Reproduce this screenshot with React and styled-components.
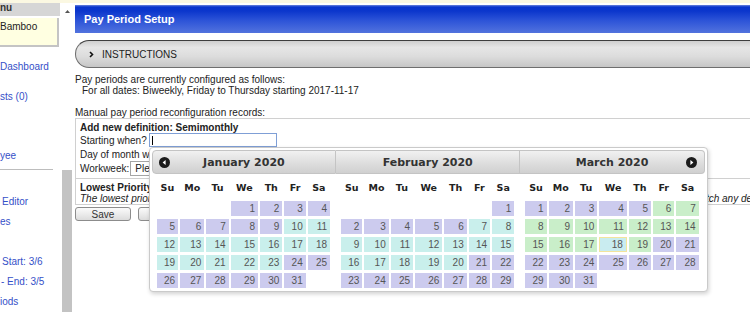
import React from 'react';
import styled, { createGlobalStyle } from 'styled-components';

const GlobalStyle = createGlobalStyle`
  html, body { margin: 0; padding: 0; background: #fff; overflow: hidden; }
  body {
    font-family: "Liberation Sans", Arial, sans-serif;
    font-size: 10px;
    color: #222;
  }
`;

const Page = styled.div`
  width: 750px;
  height: 312px;
  overflow: hidden;
  display: flex;
  flex-direction: column;
`;

const TopStrip = styled.div`
  flex: none;
  height: 3px;
  background: #fbf8e2;
`;

const Body = styled.div`
  flex: 1;
  min-height: 0;
  display: flex;
`;

/* ---------- sidebar ---------- */

const Sidebar = styled.nav`
  width: 61px;
  flex: none;
  overflow: hidden;
  display: flex;
  flex-direction: column;
`;

const MenuHead = styled.div`
  height: 13px;
  margin-right: 1px;
  background: #d6d6d6;
  font-weight: bold;
  line-height: 9px;
  color: #333;
`;

const UserBox = styled.div`
  margin-top: 2px;
  height: 24px;
  width: 57px;
  background: #ffffe1;
  border-right: 2px solid #c4c4c4;
  border-bottom: 2px solid #c4c4c4;
  padding-top: 3px;
  box-sizing: content-box;
  line-height: 12px;
`;

const NavLink = styled.div`
  height: 20px;
  line-height: 20px;
  white-space: nowrap;
  color: #3550c8;
  margin-top: ${p => p.$gap || 0}px;
  padding-left: ${p => p.$indent || 0}px;
`;

const Rule = styled.div`
  width: 53px;
  margin-top: 3px;
  border-top: 1px solid #bdbdbd;
`;

const Scroll = styled.div`
  width: 10px;
  flex: none;
  margin-left: 1px;
  display: flex;
  flex-direction: column;
`;

const ScrollTop = styled.div`
  height: 160px;
  padding-top: 7px;
  display: flex;
  justify-content: center;
  align-items: flex-start;
`;

const ScrollTrack = styled.div`
  flex: 1;
  background: #c3c3c3;
`;

/* ---------- main ---------- */

const Main = styled.main`
  flex: 1;
  min-width: 0;
  padding: 2px 0 0 3px;
`;

const TitleBar = styled.div`
  height: 28px;
  line-height: 28px;
  padding-left: 9px;
  color: #fff;
  font-weight: bold;
  font-size: 11px;
  background: linear-gradient(#6d86dc 0px, #0a35cc 2px, #0b36cc 6px, #2e55d8 16px, #5273de 28px);
`;

const InstrBar = styled.div`
  margin-top: 7px;
  height: 28px;
  box-sizing: border-box;
  border: 1px solid #6e6e6e;
  border-top-color: #3f3f3f;
  border-right: none;
  border-radius: 14px 0 0 14px;
  background: linear-gradient(#cfcfcf, #e6e6e6 25%, #dcdcdc 60%, #c6c6c6);
  display: flex;
  align-items: center;
  padding-left: 13px;
  gap: 8px;
  color: #222;
`;

const Para = styled.div`
  line-height: 11px;
  white-space: nowrap;
  margin-top: ${p => p.$gap || 0}px;
  padding-left: ${p => p.$indent || 0}px;
`;

const Form = styled.div`
  width: 720px;
  border: 1px solid #d0d0d0;
  border-right: none;
`;

const FormSection = styled.div`
  padding: 2px 4px ${p => p.$pb ?? 2}px;
  & + & { border-top: 1px solid #d0d0d0; }
`;

const FormRow = styled.div`
  display: flex;
  align-items: center;
  height: ${p => p.$h}px;
  white-space: nowrap;
  font-weight: ${p => (p.$bold ? 'bold' : 'normal')};
  font-style: ${p => (p.$italic ? 'italic' : 'normal')};
`;

const Anchor = styled.span`
  position: relative;
  display: flex;
  margin-left: 2px;
`;

const DateInput = styled.input`
  width: 128px;
  height: 14px;
  box-sizing: border-box;
  border: 1px solid #7f9fd6;
  padding: 0;
  margin: 0;
  outline: none;
  background: linear-gradient(#000, #000) no-repeat 2px 2px / 1px 9px, #fff;
`;

const Select = styled.select`
  margin-left: 1px;
  height: 15px;
  padding: 0;
  font: 10px "Liberation Sans", Arial, sans-serif;
  border: 1px solid #a5a5a5;
  background: #fff;
  color: #222;
`;

const Buttons = styled.div`
  margin-top: 2px;
  display: flex;
  gap: 7px;
`;

const Button = styled.button`
  width: 56px;
  height: 14px;
  padding: 0;
  font: 10px "Liberation Sans", Arial, sans-serif;
  color: #333;
  border: 1px solid #8c8c8c;
  border-radius: 3px;
  background: linear-gradient(#fbfbfb, #dcdcdc);
`;

/* ---------- datepicker ---------- */

const Popup = styled.div`
  position: absolute;
  top: 100%;
  left: 0;
  z-index: 5;
  width: 559px;
  box-sizing: border-box;
  padding: 2px 2px 3px;
  background: #fff;
  border: 1px solid #cacaca;
  border-radius: 4px;
  box-shadow: 1px 2px 4px rgba(0, 0, 0, 0.18);
  display: flex;
`;

const Group = styled.div`
  flex: 1;
  min-width: 0;
  display: flex;
  flex-direction: column;
`;

const MonthHead = styled.div`
  height: 24px;
  box-sizing: border-box;
  border: 1px solid #c4c4c4;
  border-left-width: ${p => (p.$first ? 1 : 0)}px;
  border-radius: ${p => (p.$first ? '4px 0 0 4px' : p.$last ? '0 4px 4px 0' : '0')};
  background: linear-gradient(#f1f1f1, #dcdcdc 60%, #d0d0d0);
  display: grid;
  grid-template-columns: 22px 1fr 22px;
  align-items: center;
`;

const MonthTitle = styled.div`
  text-align: center;
  font: bold 11px "DejaVu Sans", Verdana, sans-serif;
  color: #333;
`;

const NavSlot = styled.span`
  display: grid;
`;

const NavIcon = styled.svg`
  width: 11px;
  height: 11px;
  justify-self: ${p => (p.$side === 'prev' ? 'start' : 'end')};
  margin: ${p => (p.$side === 'prev' ? '0 0 0 6px' : '0 7px 0 0')};
`;

const Days = styled.div`
  display: grid;
  grid-template-columns: 21fr 24fr 22fr 27fr 22fr 21fr 22fr;
  grid-template-rows: 22px;
  grid-auto-rows: 15px;
  column-gap: 2px;
  row-gap: 3px;
  padding: 2px 6px 0 5px;
`;

const WeekDay = styled.div`
  display: flex;
  align-items: center;
  justify-content: center;
  font: bold 9.5px "DejaVu Sans", Verdana, sans-serif;
  color: #222;
`;

const tones = {
  lav: '#cccbee',
  teal: '#c9efec',
  green: '#c9eec9',
  today: '#c9ecf0',
};

const DayCell = styled.div`
  box-sizing: border-box;
  text-align: right;
  padding-right: 3px;
  line-height: ${p => (p.$tone === 'today' ? 13 : 15)}px;
  color: #555;
  background: ${p => tones[p.$tone] || 'transparent'};
  border: ${p => (p.$tone === 'today' ? '1px solid #f2e59c' : 'none')};
`;

const weekdays = ['Su', 'Mo', 'Tu', 'We', 'Th', 'Fr', 'Sa'];

const months = [
  { name: 'January 2020', offset: 3, days: 31, tone: d => (d >= 10 && d <= 23 ? 'teal' : 'lav'), nav: 'prev' },
  { name: 'February 2020', offset: 6, days: 29, tone: d => (d >= 7 && d <= 20 ? 'teal' : 'lav') },
  { name: 'March 2020', offset: 0, days: 31, tone: d => (d === 18 ? 'today' : d >= 6 && d <= 19 ? 'green' : 'lav'), nav: 'next' },
];

function Nav({ side }) {
  const pts = side === 'prev' ? '6.6,3 3.6,5.5 6.6,8' : '4.4,3 7.4,5.5 4.4,8';
  return (
    <NavIcon $side={side} viewBox="0 0 11 11">
      <circle cx="5.5" cy="5.5" r="5.5" fill="#1b1b1b" />
      <polygon points={pts} fill="#fff" />
    </NavIcon>
  );
}

function Month({ month, index }) {
  const blanks = Array.from({ length: month.offset });
  const days = Array.from({ length: month.days }, (_, i) => i + 1);
  return (
    <Group>
      <MonthHead $first={index === 0} $last={index === 2}>
        <NavSlot>{month.nav === 'prev' && <Nav side="prev" />}</NavSlot>
        <MonthTitle>{month.name}</MonthTitle>
        <NavSlot>{month.nav === 'next' && <Nav side="next" />}</NavSlot>
      </MonthHead>
      <Days>
        {weekdays.map(w => <WeekDay key={w}>{w}</WeekDay>)}
        {blanks.map((_, i) => <DayCell key={'b' + i} />)}
        {days.map(d => <DayCell key={d} $tone={month.tone(d)}>{d}</DayCell>)}
      </Days>
    </Group>
  );
}

function DatePicker() {
  return (
    <Popup>
      {months.map((m, i) => <Month key={m.name} month={m} index={i} />)}
    </Popup>
  );
}

export default function App() {
  return (
    <Page>
      <GlobalStyle />
      <TopStrip />
      <Body>
        <Sidebar>
          <MenuHead>nu</MenuHead>
          <UserBox>Bamboo</UserBox>
          <NavLink $gap={10}>Dashboard</NavLink>
          <NavLink $gap={10}>sts (0)</NavLink>
          <NavLink $gap={10} />
          <NavLink $gap={10}>yee</NavLink>
          <Rule />
          <NavLink $gap={22} $indent={2}>Editor</NavLink>
          <NavLink>es</NavLink>
          <NavLink />
          <NavLink $indent={2}>Start: 3/6</NavLink>
          <NavLink $indent={1}>- End: 3/5</NavLink>
          <NavLink>iods</NavLink>
        </Sidebar>
        <Scroll>
          <ScrollTop>
            <svg width="5" height="3" viewBox="0 0 5 3"><polygon points="0,3 2.5,0 5,3" fill="#555" /></svg>
          </ScrollTop>
          <ScrollTrack />
        </Scroll>
        <Main>
          <TitleBar>Pay Period Setup</TitleBar>
          <InstrBar>
            <svg width="5" height="7" viewBox="0 0 5 7"><polyline points="1,1 3.5,3.5 1,6" fill="none" stroke="#111" strokeWidth="1.6" /></svg>
            INSTRUCTIONS
          </InstrBar>
          <Para $gap={6}>Pay periods are currently configured as follows:</Para>
          <Para $indent={7}>For all dates: Biweekly, Friday to Thursday starting 2017-11-17</Para>
          <Para $gap={11}>Manual pay period reconfiguration records:</Para>
          <Form>
            <FormSection>
              <FormRow $h={12} $bold>Add new definition: Semimonthly</FormRow>
              <FormRow $h={14}>
                Starting when?
                <Anchor>
                  <DateInput type="text" />
                  <DatePicker />
                </Anchor>
              </FormRow>
              <FormRow $h={14}>Day of month when period starts:</FormRow>
              <FormRow $h={15}>
                Workweek:
                <Select defaultValue="x"><option value="x">Please select a workweek</option></Select>
              </FormRow>
            </FormSection>
            <FormSection $pb={0}>
              <FormRow $h={12} $bold>Lowest Priority</FormRow>
              <FormRow $h={11} $italic>
                The lowest priority definition is the fallback configuration, and it will then be applied to all of the remaining dates in the calendar that do not match any definitions above.
              </FormRow>
            </FormSection>
          </Form>
          <Buttons>
            <Button>Save</Button>
            <Button>Cancel</Button>
          </Buttons>
        </Main>
      </Body>
    </Page>
  );
}
